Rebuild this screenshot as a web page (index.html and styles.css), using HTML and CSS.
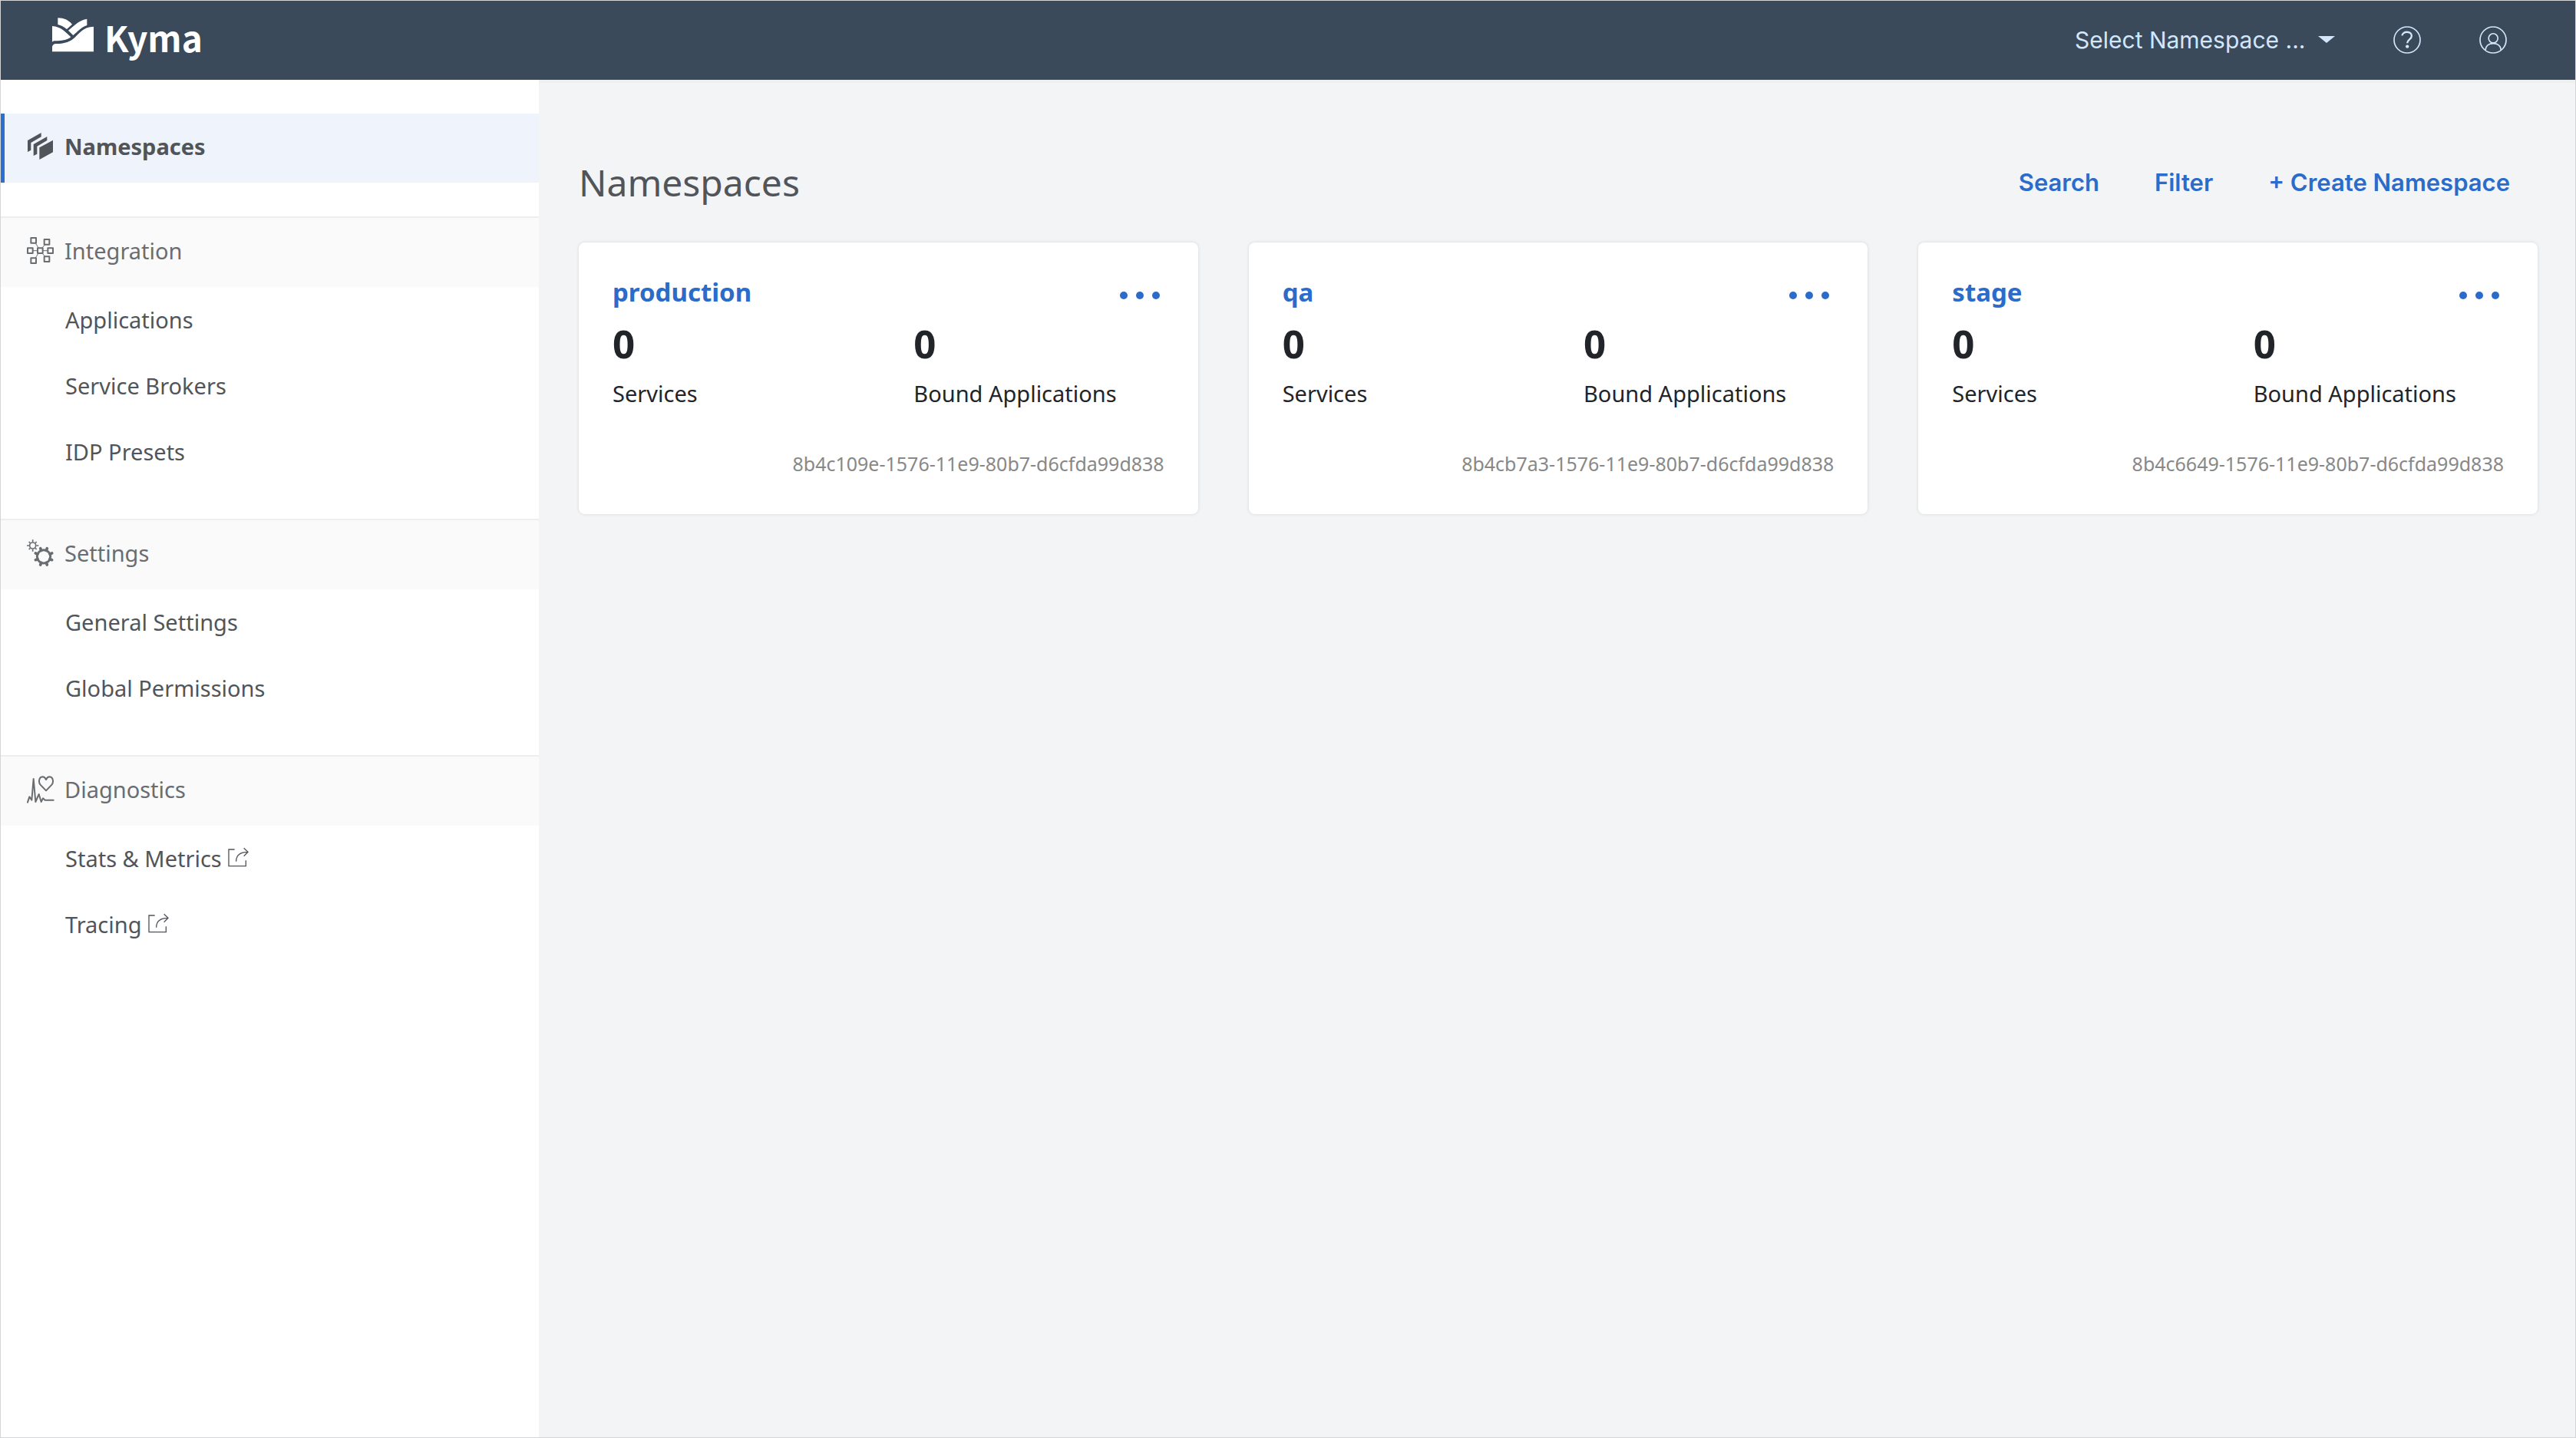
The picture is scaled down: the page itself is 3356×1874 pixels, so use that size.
FILE: index.html
```html
<!DOCTYPE html>
<html lang="en">
<head>
<meta charset="utf-8">
<meta name="viewport" content="width=device-width, initial-scale=1">
<title>Kyma</title>
<link rel="stylesheet" href="styles.css">
</head>
<body>
<div class="shell">
  <header class="topbar">
    <a class="brand" href="#">
      <svg class="brand-mark" viewBox="204 71 162 135" aria-hidden="true">
        <path d="M226 72C250 72 267 80 282 97L261 116C250 107 240 101 226 98Z"/>
        <path d="M340 76C310 80 294 99 267 121L286 140C304 125 318 107 340 101Z"/>
        <path d="M204 104C240 106 258 130 277 147C262 160 238 162 216 162C211 162 207 163 204 166Z"/>
        <path d="M204 204V184C207 176 211 174 218 173C250 174 275 165 292 149C310 132 325 107 366 106V204Z"/>
      </svg>
      <span>Kyma</span>
    </a>
    <div class="topbar-tools">
      <label class="namespace-picker">
        <select aria-label="Namespace"><option>Select Namespace ...</option></select>
        <svg class="caret" viewBox="0 0 22 9" aria-hidden="true"><path d="M0 0H22L11 9Z"/></svg>
      </label>
      <button class="icon-button" type="button" aria-label="Help">
        <svg viewBox="384 39 107 107" aria-hidden="true">
          <circle cx="437.500" cy="92.500" r="50.500"/>
          <path class="thick" d="M418 76C419 67 428 62 437 62C448 62 455 69 455 77C455 91 438 90 438 105"/>
          <circle class="dot" cx="438" cy="118" r="6.500"/>
        </svg>
      </button>
      <button class="icon-button" type="button" aria-label="User">
        <svg viewBox="720 44 107 107" aria-hidden="true">
          <circle cx="773.500" cy="97.500" r="50.500"/>
          <circle cx="774" cy="91" r="18"/>
          <path d="M744 137C745 119 759 111 774 111C789 111 803 119 804 137"/>
        </svg>
      </button>
    </div>
  </header>

  <div class="body">
    <nav class="sidebar" aria-label="Main">
      <a class="nav-head nav-active" href="#" aria-current="page">
        <svg viewBox="105 519 108 108" aria-hidden="true">
          <path class="solid" d="M108 549L161 519V535L121 558V587L108 594ZM131 564L184 534V549L145 572V602L131 609ZM154 577L207 548V595L154 624Z"/>
        </svg>
        <span>Namespaces</span>
      </a>

      <section class="nav-group">
        <h2 class="nav-head">
          <svg viewBox="105 147 108 108" aria-hidden="true">
            <path class="thin" d="M137 168L151 190M178 174L164 190M128 200H147M167 200H186M137 231L150 210M178 225L165 210"/>
            <path class="squares" d="M121 150h20v20h-20zM173 156h20v20h-20zM108 190h20v20h-20zM147 190h20v20h-20zM187 190h20v20h-20zM121 229h20v20h-20zM173 223h20v20h-20z"/>
          </svg>
          <span>Integration</span>
        </h2>
        <ul>
          <li><a href="#">Applications</a></li>
          <li><a href="#">Service Brokers</a></li>
          <li><a href="#">IDP Presets</a></li>
        </ul>
      </section>

      <section class="nav-group">
        <h2 class="nav-head">
          <svg viewBox="105 129 108 108" aria-hidden="true">
            <circle class="gear-small" cx="128" cy="153" r="12"/>
            <path class="teeth-small" d="M128 139V130M128 167V176M114 153H105M142 153H151M118 143L113 138M138 143L143 138M118 163L113 168M138 163L143 168"/>
            <circle class="gear-big" cx="171" cy="196" r="26"/>
            <path class="teeth-big" d="M181 172L184 164M161 172L158 164M181 220L184 228M161 220L158 228M195 186L203 183M195 206L203 209M147 186L139 183M147 206L139 209"/>
          </svg>
          <span>Settings</span>
        </h2>
        <ul>
          <li><a href="#">General Settings</a></li>
          <li><a href="#">Global Permissions</a></li>
        </ul>
      </section>

      <section class="nav-group">
        <h2 class="nav-head">
          <svg viewBox="105 153 108 108" aria-hidden="true">
            <path class="pulse" d="M180 211L157 187C150 178 152 158 166 157C173 157 177 161 180 168C183 161 187 157 194 157C208 158 210 178 203 187Z"/>
            <path class="pulse" d="M108 257L115 235L124 248L131 165L139 255L152 225L161 255L168 241L176 248H209"/>
          </svg>
          <span>Diagnostics</span>
        </h2>
        <ul>
          <li><a href="#">Stats &amp; Metrics
            <svg class="external" viewBox="888 434 84 78" aria-hidden="true"><path d="M917 443H894V508H961V486M923 490C923 465 940 453 969 453M953 438L969 453L953 469"/></svg></a></li>
          <li><a href="#">Tracing
            <svg class="external" viewBox="888 434 84 78" aria-hidden="true"><path d="M917 443H894V508H961V486M923 490C923 465 940 453 969 453M953 438L969 453L953 469"/></svg></a></li>
        </ul>
      </section>
    </nav>

    <main class="content">
      <div class="page-head">
        <h1>Namespaces</h1>
        <div class="actions">
          <button type="button">Search</button>
          <button type="button">Filter</button>
          <button type="button">+ Create Namespace</button>
        </div>
      </div>

      <div class="cards">
        <article class="card">
          <div class="card-head">
            <h3><a href="#">production</a></h3>
            <button class="more" type="button" aria-label="More actions"><svg viewBox="0 0 52 10" aria-hidden="true"><circle cx="5" cy="5" r="5"/><circle cx="26" cy="5" r="5"/><circle cx="47" cy="5" r="5"/></svg></button>
          </div>
          <dl class="stats">
            <div><dt>Services</dt><dd>0</dd></div>
            <div><dt>Bound Applications</dt><dd>0</dd></div>
          </dl>
          <p class="uid">8b4c109e-1576-11e9-80b7-d6cfda99d838</p>
        </article>

        <article class="card">
          <div class="card-head">
            <h3><a href="#">qa</a></h3>
            <button class="more" type="button" aria-label="More actions"><svg viewBox="0 0 52 10" aria-hidden="true"><circle cx="5" cy="5" r="5"/><circle cx="26" cy="5" r="5"/><circle cx="47" cy="5" r="5"/></svg></button>
          </div>
          <dl class="stats">
            <div><dt>Services</dt><dd>0</dd></div>
            <div><dt>Bound Applications</dt><dd>0</dd></div>
          </dl>
          <p class="uid">8b4cb7a3-1576-11e9-80b7-d6cfda99d838</p>
        </article>

        <article class="card">
          <div class="card-head">
            <h3><a href="#">stage</a></h3>
            <button class="more" type="button" aria-label="More actions"><svg viewBox="0 0 52 10" aria-hidden="true"><circle cx="5" cy="5" r="5"/><circle cx="26" cy="5" r="5"/><circle cx="47" cy="5" r="5"/></svg></button>
          </div>
          <dl class="stats">
            <div><dt>Services</dt><dd>0</dd></div>
            <div><dt>Bound Applications</dt><dd>0</dd></div>
          </dl>
          <p class="uid">8b4c6649-1576-11e9-80b7-d6cfda99d838</p>
        </article>
      </div>
    </main>
  </div>
</div>
</body>
</html>
```
FILE: styles.css
```css
* {
  box-sizing: border-box;
}

body,
h1,
h2,
h3,
p,
ul,
dl,
dd {
  margin: 0;
}

ul {
  padding: 0;
  list-style: none;
}

a {
  color: inherit;
  text-decoration: none;
}

button,
select {
  padding: 0;
  border: 0;
  background: none;
  color: inherit;
  font: inherit;
  cursor: pointer;
}

body {
  background: #f3f4f5;
  color: #212529;
  font: 29px/44px "Noto Sans", sans-serif;
}

.shell {
  display: flex;
  flex-direction: column;
  min-height: 100vh;
  border: 1px solid #d3d5d7;
}

/* Top bar */

.topbar {
  display: flex;
  align-items: center;
  justify-content: space-between;
  height: 103px;
  padding: 0 89px 2px 67px;
  background: #3a4a5b;
  color: #d3e6fc;
}

.brand {
  display: flex;
  align-items: baseline;
  gap: 14px;
  padding-bottom: 9px;
  color: #fff;
  font: bold 46px/46px "Noto Sans CJK SC", sans-serif;
}

.brand-mark {
  width: 54px;
  height: 45px;
  fill: currentColor;
}

.topbar-tools {
  display: flex;
  align-items: center;
  gap: 76px;
}

.namespace-picker {
  display: flex;
  align-items: center;
  gap: 16px;
}

.namespace-picker select {
  appearance: none;
  font: 30px/44px Inter, sans-serif;
}

.caret {
  width: 22px;
  height: 9px;
  fill: currentColor;
  pointer-events: none;
}

.icon-button svg {
  display: block;
  width: 36px;
  height: 36px;
  fill: none;
  stroke: currentColor;
  stroke-width: 5;
}

.icon-button .thick {
  stroke-width: 7;
}

.icon-button .dot {
  fill: currentColor;
  stroke: none;
}

.body {
  display: flex;
  flex: 1;
}

/* Side navigation */

.sidebar {
  display: flex;
  flex: 0 0 701px;
  flex-direction: column;
  gap: 44px;
  padding: 44px 0;
  background: #fff;
  color: #51555a;
}

.nav-head {
  display: flex;
  align-items: center;
  gap: 13px;
  padding: 21px 34px 25px;
  font: inherit;
}

.nav-head svg {
  width: 36px;
  height: 36px;
  fill: none;
  stroke: currentColor;
  stroke-linejoin: round;
}

.nav-head .solid {
  fill: currentColor;
  stroke: none;
}

.nav-head .thin {
  stroke-width: 3;
}

.nav-head .squares {
  stroke-width: 6;
}

.nav-head .gear-small,
.nav-head .teeth-small {
  stroke-width: 5;
}

.nav-head .gear-big {
  stroke-width: 9;
}

.nav-head .teeth-big {
  stroke-width: 11;
  stroke-linecap: round;
}

.nav-head .pulse {
  stroke-width: 6;
  stroke-linecap: round;
}

.nav-active {
  padding-left: 29px;
  border-left: 5px solid #2b6fd0;
  background: #eff4fc;
  font-weight: bold;
}

.nav-group .nav-head {
  border-top: 2px solid #eeeeef;
  background: #fafafa;
  color: #6a6d70;
}

.nav-group li a {
  display: flex;
  align-items: baseline;
  gap: 7px;
  padding: 21px 34px 21px 84px;
}

.external {
  width: 28px;
  height: 26px;
  fill: none;
  stroke: currentColor;
  stroke-width: 4;
}

/* Page content */

.content {
  flex: 1;
  padding: 97px 49px 49px 52px;
  border-top: 4px solid #eeeff1;
}

.page-head {
  display: flex;
  align-items: center;
  justify-content: space-between;
  margin-bottom: 45px;
}

.page-head h1 {
  color: #51555a;
  font-size: 48px;
  font-weight: normal;
  line-height: 66px;
}

.actions {
  display: flex;
  gap: 72px;
  padding-right: 36px;
  color: #2b6ccb;
  font: 600 31px/44px Inter, sans-serif;
}

.cards {
  display: grid;
  grid-template-columns: repeat(3, 1fr);
  gap: 66px;
}

.card {
  padding: 43px 44px 48px;
  border-radius: 8px;
  background: #fff;
  box-shadow: 0 0 4px rgba(0, 0, 0, 0.12);
}

.card-head {
  display: flex;
  justify-content: space-between;
  margin-bottom: 11px;
  color: #2b6ccb;
}

.card-head h3 {
  font-size: 33px;
}

.more {
  padding: 8px 6px 0;
}

.more svg {
  display: block;
  width: 52px;
  height: 10px;
  fill: currentColor;
}

.stats {
  display: grid;
  grid-template-columns: repeat(2, 1fr);
  gap: 66px;
  margin-bottom: 51px;
}

.stats div {
  display: flex;
  flex-direction: column-reverse;
  gap: 11px;
}

.stats dd {
  font-size: 51px;
  font-weight: bold;
  line-height: 66px;
}

.uid {
  color: #888;
  font-size: 25px;
  line-height: 36px;
  text-align: right;
}
```
